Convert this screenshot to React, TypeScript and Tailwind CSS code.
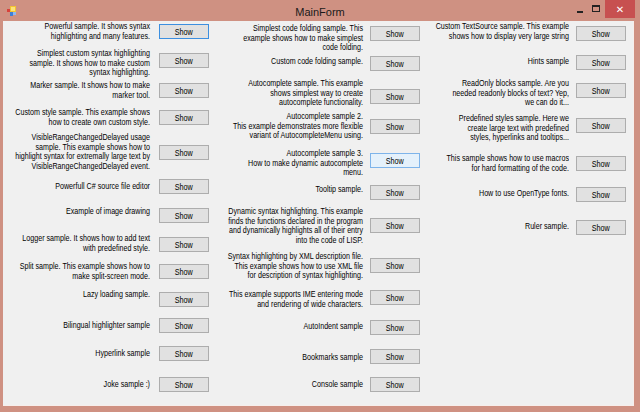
import React from 'react';

type Row = {
  lines: string[];
  h: string;
  lt: string;
  bt: string;
  btn?: 'focus' | 'hover';
};

const col1: Row[] = [
  { lines: ['Powerful sample. It shows syntax', 'highlighting and many features.'], h: 'h-[27px]', lt: '', bt: 'mt-[2px]', btn: 'focus' },
  { lines: ['Simplest custom syntax highlighting', 'sample. It shows how to make custom', 'syntax highlighting.'], h: 'h-[32px]', lt: '', bt: 'mt-[4px]' },
  { lines: ['Marker sample. It shows how to make', 'marker tool.'], h: 'h-[27px]', lt: '', bt: 'mt-[2px]' },
  { lines: ['Custom style sample. This example shows', 'how to create own custom style.'], h: 'h-[25px]', lt: '', bt: 'mt-[2px]' },
  { lines: ['VisibleRangeChangedDelayed usage', 'sample. This example shows how to', 'highlight syntax for extremally large text by', 'VisibleRangeChangedDelayed event.'], h: 'h-[46px]', lt: '', bt: 'mt-[12px]' },
  { lines: ['Powerfull C# source file editor'], h: 'h-[28px]', lt: 'mt-[3px]', bt: '' },
  { lines: ['Example of image drawing'], h: 'h-[27px]', lt: '', bt: 'mt-[1px]' },
  { lines: ['Logger sample. It shows how to add text', 'with predefined style.'], h: 'h-[28px]', lt: '', bt: 'mt-[3px]' },
  { lines: ['Split sample. This example shows how to', 'make split-screen mode.'], h: 'h-[28px]', lt: '', bt: 'mt-[2px]' },
  { lines: ['Lazy loading sample.'], h: 'h-[28px]', lt: '', bt: 'mt-[2px]' },
  { lines: ['Bilingual highlighter sample'], h: 'h-[28px]', lt: 'mt-[3px]', bt: '' },
  { lines: ['Hyperlink sample'], h: 'h-[31px]', lt: 'mt-[3px]', bt: '' },
  { lines: ['Joke sample :)'], h: 'h-[20px]', lt: 'mt-[3px]', bt: '' },
];

const col2: Row[] = [
  { lines: ['Simplest code folding sample. This', 'example shows how to make simplest', 'code folding.'], h: 'h-[32px]', lt: '', bt: 'mt-[2px]' },
  { lines: ['Custom code folding sample.'], h: 'h-[23px]', lt: 'mt-[1px]', bt: '' },
  { lines: ['Autocomplete sample. This example', 'shows simplest way to create', 'autocomplete functionality.'], h: 'h-[33px]', lt: '', bt: 'mt-[10px]' },
  { lines: ['Autocomplete sample 2.', 'This example demonstrates more flexible', 'variant of AutocompleteMenu using.'], h: 'h-[37px]', lt: '', bt: 'mt-[7px]' },
  { lines: ['Autocomplete sample 3.', 'How to make dynamic autocomplete', 'menu.'], h: 'h-[36px]', lt: '', bt: 'mt-[4px]', btn: 'hover' },
  { lines: ['Tooltip sample.'], h: 'h-[22px]', lt: '', bt: '' },
  { lines: ['Dynamic syntax highlighting. This example', 'finds the functions declared in the program', 'and dynamically highlights all of their entry', 'into the code of LISP.'], h: 'h-[45px]', lt: '', bt: 'mt-[11px]' },
  { lines: ['Syntax highlighting by XML description file.', 'This example shows how to use XML file', 'for description of syntax highlighting.'], h: 'h-[38px]', lt: '', bt: 'mt-[6px]' },
  { lines: ['This example supports IME entering mode', 'and rendering of wide characters.'], h: 'h-[30px]', lt: '', bt: '' },
  { lines: ['AutoIndent sample'], h: 'h-[29px]', lt: 'mt-[2px]', bt: '' },
  { lines: ['Bookmarks sample'], h: 'h-[28px]', lt: 'mt-[4px]', bt: '' },
  { lines: ['Console sample'], h: 'h-[20px]', lt: 'mt-[3px]', bt: '' },
];

const col3: Row[] = [
  { lines: ['Custom TextSource sample. This example', 'shows how to display very large string'], h: 'h-[33px]', lt: '', bt: 'mt-[4px]' },
  { lines: ['Hints sample'], h: 'h-[24px]', lt: 'mt-[2px]', bt: '' },
  { lines: ['ReadOnly blocks sample. Are you', 'needed readonly blocks of text? Yep,', 'we can do it...'], h: 'h-[35px]', lt: '', bt: 'mt-[4px]' },
  { lines: ['Predefined styles sample. Here we', 'create large text with predefined', 'styles, hyperlinks and tooltips...'], h: 'h-[40px]', lt: '', bt: 'mt-[4px]' },
  { lines: ['This sample shows how to use macros', 'for hard formatting of the code.'], h: 'h-[33px]', lt: '', bt: 'mt-[2px]' },
  { lines: ['How to use OpenType fonts.'], h: 'h-[33px]', lt: 'mt-[2px]', bt: '' },
  { lines: ['Ruler sample.'], h: 'h-[20px]', lt: 'mt-[2px]', bt: '' },
];

const ShowButton = ({ state, className }: { state?: 'focus' | 'hover'; className: string }) => {
  let look = 'border-[#adadad] bg-[#e1e1e1]';
  if (state === 'focus') look = 'border-[#3c8fe0] bg-[#e1e1e1]';
  if (state === 'hover') look = 'border-[#7eb4ea] bg-[#e5f1fb]';
  return (
    <div className={`flex h-[15px] w-[50px] shrink-0 items-center justify-center border ${look} ${className}`}>
      <span className="scale-x-[0.84] text-[8.6px] leading-[10px] text-black">Show</span>
    </div>
  );
};

const Column = ({ rows, labelW, gap, className }: { rows: Row[]; labelW: string; gap: string; className: string }) => (
  <div className={`flex flex-col ${className}`}>
    {rows.map((r, i) => (
      <div key={i} className={`flex items-start ${r.h}`}>
        <div className={`shrink-0 origin-right scale-x-[0.83] ${labelW} ${r.lt}`}>
          {r.lines.map((l, j) => (
            <div key={j} className="flex justify-end whitespace-nowrap">
              {l}
            </div>
          ))}
        </div>
        <ShowButton state={r.btn} className={`${gap} ${r.bt}`} />
      </div>
    ))}
  </div>
);

const AppIcon = () => (
  <svg width="9" height="10" viewBox="0 0 9 10">
    <rect x="3" y="0" width="6" height="6" fill="#f2c230" />
    <rect x="4" y="1" width="4" height="4" fill="#fbe27a" />
    <rect x="0" y="3" width="3" height="3" fill="#d9413a" />
    <rect x="3" y="6" width="3" height="4" fill="#3f7fd6" />
    <rect x="6" y="6" width="3" height="3" fill="#8fb8ee" />
  </svg>
);

export default function App() {
  return (
    <div className="flex h-[412px] w-[640px] flex-col bg-[#cf9182] font-['Liberation_Sans',Arial,sans-serif]">
      <div className="grid h-[21px] shrink-0 grid-cols-[1fr_auto_1fr] items-start">
        <div className="ml-[7px] mt-[6px]">
          <AppIcon />
        </div>
        <div className="pt-[6px] text-center text-[11px] leading-[13px] text-[#1a1a1a]">MainForm</div>
        <div className="flex justify-end">
          <div className="mt-[6px] flex h-[8px] w-[14px] items-end justify-center">
            <div className="mb-[1px] h-[2px] w-[6px] bg-[#222]" />
          </div>
          <div className="ml-[5px] mt-[5px] h-[7px] w-[8px] border border-t-2 border-[#222]" />
          <div className="ml-[5px] flex h-[18px] w-[30px] items-center justify-center bg-[#c75050] font-['DejaVu_Sans',sans-serif] text-[10px] font-bold text-white">
            ✕
          </div>
          <div className="w-[5px]" />
        </div>
      </div>
      <div className="mb-[6px] ml-[3px] mr-[6px] flex flex-1 border-b border-r border-[#f7eeeb] bg-[#f0f0f0] text-[8.6px] leading-[9.7px] text-black">
        <Column rows={col1} labelW="w-[146px]" gap="ml-[9px]" className="ml-[1px] pt-[1px]" />
        <Column rows={col2} labelW="w-[150px]" gap="ml-[7px]" className="ml-[4px] pt-[3px]" />
        <Column rows={col3} labelW="w-[144px]" gap="ml-[7px]" className="ml-[5px] pt-[1px]" />
      </div>
    </div>
  );
}
